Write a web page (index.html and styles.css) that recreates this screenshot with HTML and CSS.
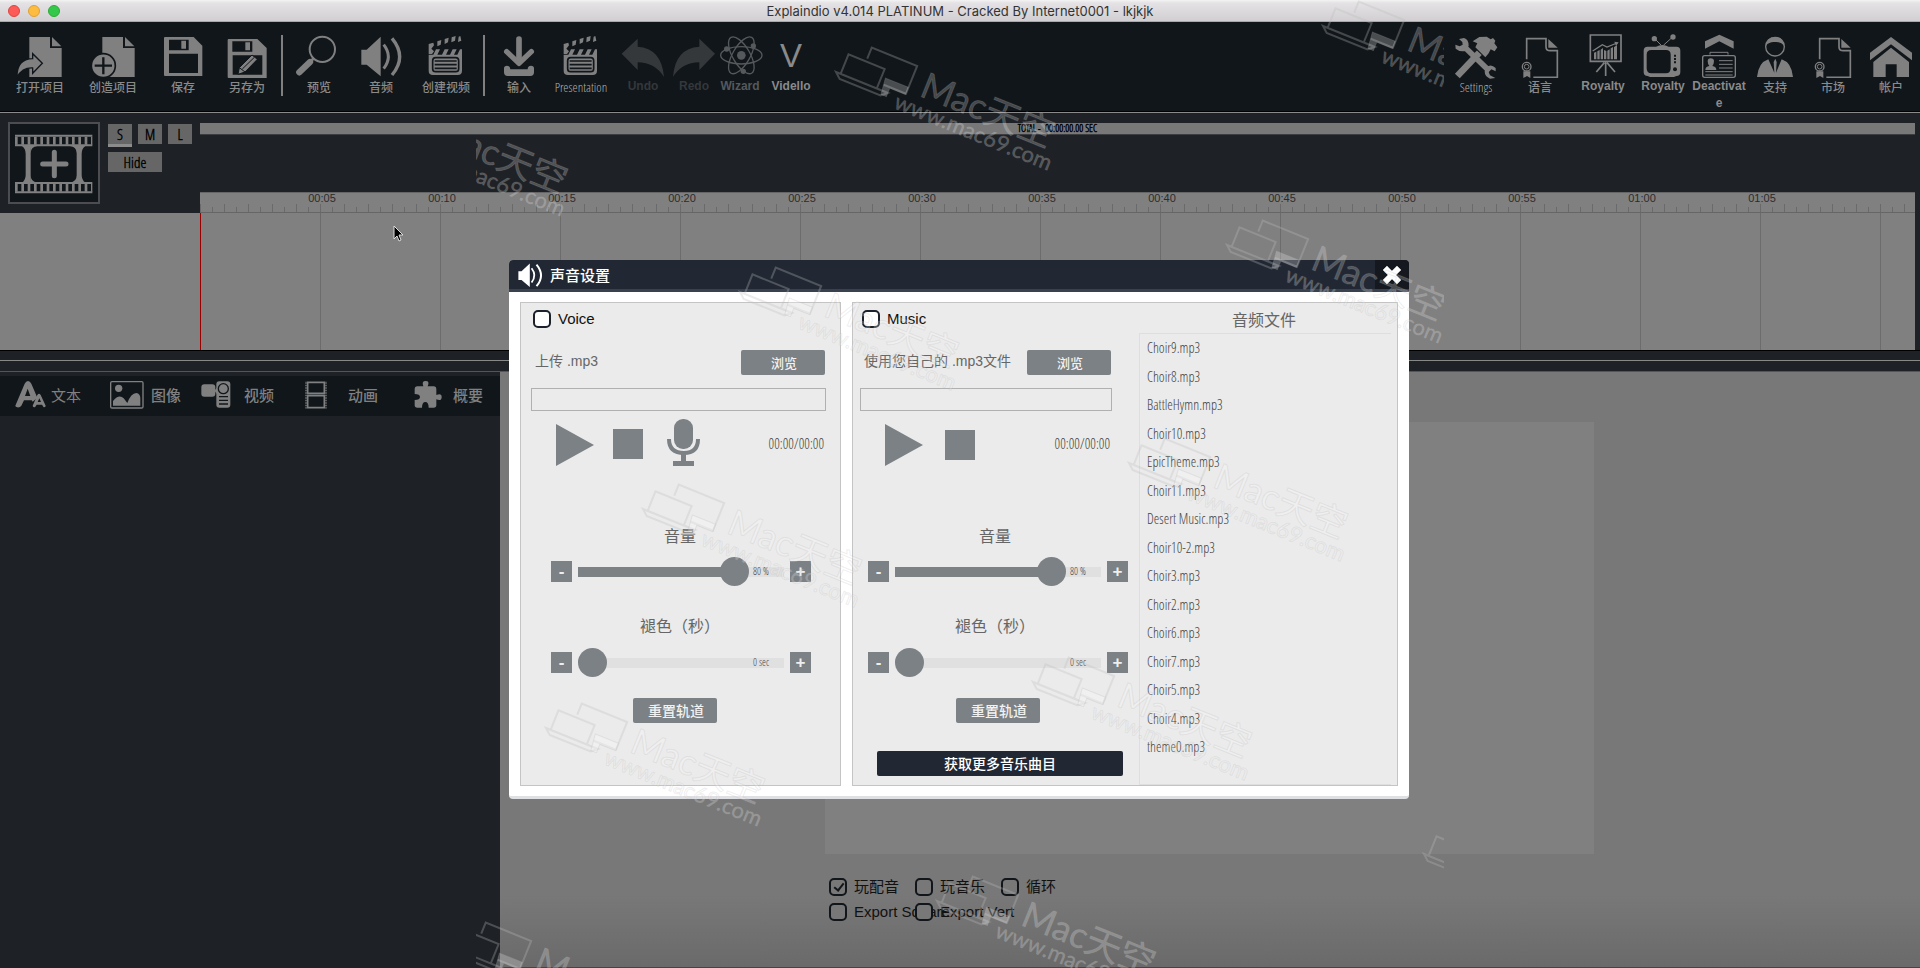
FILE: index.html
```html
<!DOCTYPE html>
<html lang="zh-CN">
<head>
<meta charset="utf-8">
<title>Explaindio v4.014 PLATINUM</title>
<link rel="stylesheet" href="styles.css">
</head>
<body>
<svg class="defs" aria-hidden="true">
  <symbol id="clapper" viewBox="1272 102 132 132">
    <path d="M1286 132l14-4 2 8-8 10 8 8-6 8h-10z M1312 124l12-4-2 14-10 5z M1334 117l12-4-2 14-10 5z M1355 112l12-4-2 14-11 5z M1376 110l5-2 3 14-10 4z"/>
    <path d="M1286 222V164h14l8-16h12l-8 16h14l8-16h12l-8 16h12l8-16h12l-8 16h10l8-16h6V212q0 13-13 13H1299q-13 0-13-13z"/>
    <rect x="1298" y="173" width="78" height="42" rx="9" class="ink-line" stroke-width="5"/>
    <path d="M1304 183h66M1304 194h66M1304 205h66" class="ink-line" stroke-width="5"/>
  </symbol>
  <symbol id="certificate" viewBox="294 102 132 132">
    <path d="M320 178V116H378V140Q378 152 391 152H412V232H340" class="line" stroke-width="5"/>
    <path d="M385 117L413 143H385z"/>
    <circle cx="320" cy="200" r="13" class="line" stroke-width="4"/>
    <circle cx="320" cy="200" r="7" class="line" stroke-width="3"/>
    <path d="M310 214h21v20l-10-6-11 6z"/>
  </symbol>
  <symbol id="speaker" viewBox="1077 102 132 132">
    <path d="M1084 149h16l42-39v119l-42-35h-16z"/>
    <path d="M1151 134q28 36 0 72" class="line" stroke-width="9"/>
    <path d="M1176 115q46 55 0 110" class="line" stroke-width="10"/>
  </symbol>
  <symbol id="mark" viewBox="0 0 250 80" overflow="visible">
    <g transform="rotate(22)">
      <path class="mark-line" d="M0 0H56L50 5H6zM5 0V-21H44V0M24 -24V-36H73V-6H49"/>
      <path class="mark-fill" d="M48 -13H73V-5H56V4H50z"/>
      <text class="mark-name" x="85" y="-9">Mac天空</text>
      <text class="mark-url" x="66" y="12">www.mac69.com</text>
    </g>
  </symbol>
</svg>

<header class="titlebar">
  <span class="lights"><i class="light red"></i><i class="light yellow"></i><i class="light green"></i></span>
  <h1>Explaindio v4.014 PLATINUM - Cracked By Internet0001 - lkjkjk</h1>
</header>

<nav class="toolbar">
  <div class="tools">
    <button class="tool w72"><svg viewBox="54 102 132 132"><path d="M88 111H150V144H185V231H88z"/><path d="M156 111L184 139H156z"/><path class="cut" stroke-width="4" d="M51 231Q50 177 98 176V161L127 190L98 220V204Q68 202 51 231z"/></svg>打开项目</button>
    <button class="tool w74"><svg viewBox="273 102 132 132"><path d="M307 111H369V144H404V231H307z"/><path d="M375 111L403 139H375z"/><circle class="cut" stroke-width="5" cx="310" cy="197" r="36"/><path class="ink-line" stroke-width="7" d="M310 172V223M284 197H336"/></svg>创造项目</button>
    <button class="tool w66"><svg viewBox="483 102 132 132"><path fill-rule="evenodd" d="M495 111H581L607 137V228H495Q492 228 492 225V114Q492 111 495 111zM507 119V151H566V119zM544 122H558V146H544zM507 161V219H594V161z"/></svg>保存</button>
    <button class="tool w62"><svg viewBox="675 102 132 132"><path fill-rule="evenodd" d="M686 117H772L800 144V234H686Q683 234 683 231V120Q683 117 686 117zM697 124V155H757V124zM736 127H750V151H736zM698 166V224H787V166z"/><path class="cut" stroke-width="3" d="M714 223L718 203L756 165L772 178L735 216z"/><path class="ink-line" stroke-width="3" d="M718 203L735 216M727 207L763 172"/></svg>另存为</button>
    <span class="divider"></span>
    <button class="tool w62"><svg viewBox="891 102 132 132"><circle cx="967" cy="148" r="38" class="line" stroke-width="6"/><path class="line round" stroke-width="19" d="M898 217L930 186"/><path class="line" stroke-width="8" d="M930 186L942 174"/></svg>预览</button>
    <button class="tool w62"><svg><use href="#speaker"/></svg>音频</button>
    <button class="tool w68"><svg><use href="#clapper"/></svg>创建视频</button>
    <span class="divider"></span>
    <button class="tool w58"><svg viewBox="48 102 132 132"><path class="line round" stroke-width="17" d="M114 117V185"/><path class="line round" stroke-width="16" d="M77 155L114 190L151 155"/><path d="M69 205Q69 197 78 197Q88 197 88 208H140Q140 197 150 197Q159 197 159 205V217Q159 228 148 228H80Q69 228 69 217z"/></svg>输入</button>
    <button class="tool w66 narrow"><svg><use href="#clapper"/></svg>Presentation</button>
    <button class="tool w58 latin off" disabled><svg viewBox="423 102 132 132"><path d="M425 161L473 116V140Q545 145 552 231Q525 188 473 187V210z"/></svg>Undo</button>
    <button class="tool w44 latin off" disabled><svg viewBox="573 102 132 132"><path d="M702 161L655 116V140Q582 145 576 231Q602 188 655 187V210z"/></svg>Redo</button>
    <button class="tool w48 latin dim"><svg viewBox="714 102 132 132"><g class="line" stroke-width="4"><ellipse cx="784" cy="166" rx="62" ry="26"/><ellipse cx="784" cy="166" rx="62" ry="26" transform="rotate(60 784 166)"/><ellipse cx="784" cy="166" rx="62" ry="26" transform="rotate(120 784 166)"/></g><circle cx="784" cy="166" r="13"/><circle cx="740" cy="147" r="8"/><circle cx="820" cy="138" r="8"/><circle cx="790" cy="214" r="8"/></svg>Wizard</button>
    <button class="tool w54 latin"><span class="letter">V</span>Vidello</button>
  </div>
  <div class="tools">
    <button class="tool w64 narrow"><svg viewBox="102 102 132 132"><path class="line" stroke-width="17" d="M136 143L208 213"/><path d="M117 117L132 114Q146 118 146 137L138 152Q122 158 107 146L106 134L119 139L128 134L127 126z"/><path d="M226 234L210 236Q194 230 194 214L200 202Q212 190 227 204V214L214 208L206 216L210 226z"/><path class="line" stroke-width="20" d="M112 228L178 158"/><path d="M158 124L178 111L200 110L212 118L219 114L226 122L223 130L232 142L224 154L212 148L206 160L196 172L166 142L172 130z"/></svg>Settings</button>
    <button class="tool w64"><svg><use href="#certificate"/></svg>语言</button>
    <button class="tool w62 latin"><svg viewBox="486 102 132 132"><path class="line" stroke-width="5" d="M514 105H606V184H514zM560 186V228M556 188L532 216M564 188L588 216"/><path d="M525 178V158l7-3v23zM535 178V154l7-4v28zM545 178V149l7-5v34zM555 178V150l7 3v25zM565 178V152l7-4v30zM575 178V145l7-4v37zM585 178V141l9-5v42z"/><path class="line" stroke-width="4" d="M521 153L550 134L564 141L594 129"/><path d="M586 125L599 127L591 138z"/></svg>Royalty</button>
    <button class="tool w58 latin"><svg viewBox="669 102 132 132"><path fill-rule="evenodd" d="M689 140H714Q734 130 752 140H775Q787 140 787 152V216Q787 228 775 228L768 231H696L689 228Q677 228 677 216V152Q677 140 689 140zM700 150Q686 150 686 164V205Q686 220 700 220H744Q758 220 758 205V164Q758 150 744 150z"/><path class="line" stroke-width="3" d="M730 136L709 115M736 136L765 110"/><circle cx="709" cy="116" r="8"/><circle cx="765" cy="111" r="8"/><g class="ink"><circle cx="771" cy="208" r="6"/><path d="M768 164h6v6h-6zM768 174h6v6h-6zM768 184h6v6h-6z"/></g></svg>Royalty</button>
    <button class="tool w54 latin"><svg viewBox="837 102 132 132"><path d="M861 124L904 104L947 124V146L904 124L861 146z"/><rect x="854" y="167" width="98" height="65" rx="6" class="line" stroke-width="4"/><path class="line" stroke-width="3" d="M876 164V157H930V164M903 182H944M903 193H944M903 204H944M862 215H944M862 225H944"/><path d="M862 210Q862 200 874 198Q869 191 869 184Q869 175 878 175Q888 175 888 184Q888 191 883 198Q895 200 895 210z"/></svg>Deactivate</button>
    <button class="tool w58"><svg viewBox="1002 102 132 132"><circle cx="1068" cy="140" r="28" class="line" stroke-width="4"/><path d="M1040 137Q1044 111 1068 111Q1092 111 1096 137Q1084 124 1068 126Q1052 124 1040 137z"/><path d="M1014 231Q1018 188 1048 178L1066 218L1064 186L1069 176L1073 186L1071 218L1088 178Q1118 188 1122 231z"/></svg>支持</button>
    <button class="tool w58"><svg><use href="#certificate"/></svg>市场</button>
    <button class="tool w58"><svg viewBox="1347 102 132 132"><path d="M1350 158L1413 111L1476 158V181L1413 133L1350 181z"/><path d="M1360 186L1413 143L1467 186V231H1430V193H1397V231H1360z"/></svg>帐户</button>
  </div>
</nav>

<section class="timeline">
  <div class="timeline-side">
    <button class="add-scene" aria-label="Add scene"><svg viewBox="30 372 264 234"><path class="line" stroke-width="6" d="M45 407H277M45 436H277M45 549H277M45 577H277"/><path class="line" stroke-width="24" stroke-dasharray="8 11" d="M45 422H277M45 563H277"/><path d="M66 438H92V548H66Q77 540 77 525V461Q77 446 66 438zM230 438H256Q245 446 245 461V525Q245 540 256 548H230z"/><path d="M90 438H112Q92 440 92 460zM232 438H210Q230 440 230 460zM90 548H112Q92 546 92 526zM232 548H210Q230 546 230 526z"/><path class="line round" stroke-width="15" d="M163 457V527M128 492H198"/></svg></button>
    <div class="sizes">
      <button class="size active">S</button><button class="size">M</button><button class="size">L</button>
      <button class="size hide">Hide</button>
    </div>
  </div>
  <div class="timeline-main">
    <div class="total">TOTAL -&nbsp; 00:00:00.00 SEC</div>
    <div class="ruler"><span>00:05</span><span>00:10</span><span>00:15</span><span>00:20</span><span>00:25</span><span>00:30</span><span>00:35</span><span>00:40</span><span>00:45</span><span>00:50</span><span>00:55</span><span>01:00</span><span>01:05</span></div>
  </div>
</section>
<div class="tracks"><div class="track-grid"></div></div>
<div class="splitter"></div>

<main class="workspace">
  <aside class="library">
    <nav class="tabs">
      <button class="tab t-text"><svg width="32" height="28" viewBox="45 122 96 84"><path fill-rule="evenodd" d="M46 196L74 130Q78 122 84 122Q90 122 94 130L112 172L98 184L95 180H72L64 196Q60 202 52 201Q46 200 46 196zM83 145L75 167H91z"/><path fill-rule="evenodd" d="M98 196L112 164Q117 156 122 164L137 196Q137 201 131 201L126 193H110L105 201Q98 201 98 196zM118 174L113 185H123z"/></svg>文本</button>
      <button class="tab t-image"><svg width="34" height="28" viewBox="329 128 102 84"><rect x="331" y="130" width="97" height="79" rx="4" class="line" stroke-width="4"/><circle cx="355" cy="150" r="11"/><path d="M338 202V188Q356 166 370 180L381 194Q392 164 408 164Q420 166 420 180V202z"/></svg>图像</button>
      <button class="tab t-video"><svg width="30" height="28" viewBox="602 127 90 84"><rect x="603" y="137" width="42" height="37" rx="9"/><path d="M642 156L652 144V168z"/><rect x="648" y="128" width="42" height="79" rx="9"/><circle cx="669" cy="150" r="15" class="ink-line" stroke-width="4"/><path class="ink-line" stroke-width="4" d="M656 174H683M656 185H683M656 196H683"/></svg>视频</button>
      <button class="tab t-motion"><svg width="22" height="28" viewBox="914 127 66 84"><path class="line" stroke-width="5" d="M922 131H972V164H922zM922 171H972V207H922z"/><path class="line" stroke-width="4" stroke-dasharray="3 2" d="M917 129V210M977 129V210"/></svg>动画</button>
      <button class="tab t-more"><svg width="28" height="28" viewBox="1240 123 84 84"><path d="M1250 139H1268Q1262 123 1275 123Q1288 123 1281 139H1299Q1307 139 1307 148V165Q1323 158 1323 171Q1323 185 1307 178V196Q1307 203 1299 203H1284Q1284 186 1274 186Q1264 186 1264 203H1250Q1242 203 1242 196V180Q1258 180 1258 171Q1258 162 1242 162V148Q1242 139 1250 139z"/></svg>概要</button>
    </nav>
  </aside>
  <section class="preview">
    <div class="stage"></div>
    <div class="options">
      <label class="check"><input type="checkbox" checked>玩配音</label>
      <label class="check"><input type="checkbox">玩音乐</label>
      <label class="check"><input type="checkbox">循环</label>
      <label class="check"><input type="checkbox">Export Square</label>
      <label class="check"><input type="checkbox">Export Vert</label>
    </div>
  </section>
</main>

<div class="overlay">
  <section class="dialog" role="dialog" aria-labelledby="dialog-title">
    <header class="dialog-head">
      <svg width="26" height="26"><use href="#speaker"/></svg>
      <h2 id="dialog-title">声音设置</h2>
      <button class="close" aria-label="Close"><svg width="18" height="18" viewBox="0 0 18 18"><path d="M4 4L14 14M14 4L4 14"/></svg></button>
    </header>
    <div class="dialog-body">
      <section class="panel voice">
        <label class="check"><input type="checkbox">Voice</label>
        <div class="upload"><label for="voice-file">上传 .mp3</label><button class="btn">浏览</button></div>
        <input class="path" id="voice-file" type="text">
        <div class="player">
          <button aria-label="Play"><svg width="38" height="44" viewBox="0 0 38 44"><path d="M0 1L38 22L0 43z"/></svg></button>
          <button aria-label="Stop" class="stop"><svg width="30" height="30"><rect width="30" height="30"/></svg></button>
          <button aria-label="Record" class="mic"><svg width="34" height="48" viewBox="0 0 34 48"><rect x="7" width="19" height="30" rx="9"/><path class="line" stroke-width="4" d="M2 20Q2 34 17 34Q31 34 31 20"/><path d="M14 34H19V42H27V47H6V42H14z"/></svg></button>
          <span class="time">00:00/00:00</span>
        </div>
        <div class="controls">
          <label class="caption" for="voice-vol">音量</label>
          <div class="slider"><button class="step">-</button><div class="range"><input id="voice-vol" type="range" value="80" class="full"><output for="voice-vol">80 %</output></div><button class="step">+</button></div>
          <label class="caption second" for="voice-fade">褪色（秒）</label>
          <div class="slider"><button class="step">-</button><div class="range"><input id="voice-fade" type="range" value="0"><output for="voice-fade">0 sec</output></div><button class="step">+</button></div>
          <button class="btn reset">重置轨道</button>
        </div>
      </section>
      <section class="panel music">
        <div class="music-main">
          <label class="check"><input type="checkbox">Music</label>
          <div class="upload"><label for="music-file">使用您自己的 .mp3文件</label><button class="btn">浏览</button></div>
          <input class="path" id="music-file" type="text">
          <div class="player">
            <button aria-label="Play"><svg width="38" height="44" viewBox="0 0 38 44"><path d="M0 1L38 22L0 43z"/></svg></button>
            <button aria-label="Stop" class="stop"><svg width="30" height="30"><rect width="30" height="30"/></svg></button>
            <span class="time">00:00/00:00</span>
          </div>
          <div class="controls">
            <label class="caption" for="music-vol">音量</label>
            <div class="slider"><button class="step">-</button><div class="range"><input id="music-vol" type="range" value="80" class="full"><output for="music-vol">80 %</output></div><button class="step">+</button></div>
            <label class="caption second" for="music-fade">褪色（秒）</label>
            <div class="slider"><button class="step">-</button><div class="range"><input id="music-fade" type="range" value="0"><output for="music-fade">0 sec</output></div><button class="step">+</button></div>
            <button class="btn reset">重置轨道</button>
            <button class="btn more">获取更多音乐曲目</button>
          </div>
        </div>
        <div class="files">
          <h3>音频文件</h3>
          <ul>
            <li>Choir9.mp3</li><li>Choir8.mp3</li><li>BattleHymn.mp3</li><li>Choir10.mp3</li><li>EpicTheme.mp3</li><li>Choir11.mp3</li><li>Desert Music.mp3</li><li>Choir10-2.mp3</li><li>Choir3.mp3</li><li>Choir2.mp3</li><li>Choir6.mp3</li><li>Choir7.mp3</li><li>Choir5.mp3</li><li>Choir4.mp3</li><li>theme0.mp3</li>
          </ul>
        </div>
      </section>
    </div>
  </section>
</div>

<svg class="marks" aria-hidden="true">
  <use href="#mark" width="250" height="80" x="-127" y="118"/>
  <use href="#mark" width="250" height="80" x="360" y="72"/>
  <use href="#mark" width="250" height="80" x="847" y="26"/>
  <use href="#mark" width="250" height="80" x="264" y="292"/>
  <use href="#mark" width="250" height="80" x="751" y="245"/>
  <use href="#mark" width="250" height="80" x="167" y="509"/>
  <use href="#mark" width="250" height="80" x="653" y="463"/>
  <use href="#mark" width="250" height="80" x="70" y="728"/>
  <use href="#mark" width="250" height="80" x="557" y="682"/>
  <use href="#mark" width="250" height="80" x="-26" y="947"/>
  <use href="#mark" width="250" height="80" x="461" y="901"/>
  <use href="#mark" width="250" height="80" x="948" y="854"/>
</svg>
<svg class="pointer" width="12" height="18" viewBox="0 0 12 18" aria-hidden="true"><path d="M1 1V14L4 11L6 16L8 15L6 10H10z"/></svg>
</body>
</html>
```

FILE: styles.css
```css
:root {
  --ink: #11161a;
  --deep: #1e2126;
  --gray: #808080;
  --steel: #7c8185;
  --sans: "Liberation Sans", "Noto Sans CJK SC", sans-serif;
  --cjk: "Noto Sans CJK SC", sans-serif;
  --narrow: "Open Sans Condensed Light", "Open Sans Condensed", "Roboto Condensed", Roboto, sans-serif;
}
* { box-sizing: border-box; margin: 0; padding: 0; }
body {
  display: flex; flex-direction: column; min-height: 100vh; position: relative;
  overflow: hidden; background: var(--deep); font-family: var(--sans); font-size: 15px; color: #111;
}
button { font: inherit; color: inherit; background: none; border: 0; }
svg { fill: currentColor; flex: none; display: block; overflow: visible; }
.defs { position: absolute; width: 0; height: 0; }
.line { fill: none; stroke: currentColor; }
.round { stroke-linecap: round; stroke-linejoin: round; }
.ink { fill: var(--ink); }
.ink-line { fill: none; stroke: var(--ink); }
.cut { fill: currentColor; stroke: var(--ink); }

/* Window title */
.titlebar {
  display: grid; grid-template-columns: 1fr auto 1fr; align-items: center; height: 22px;
  background: linear-gradient(#f4f3f4, #e4e2e4 3px, #d1cfd1); border-bottom: 1px solid #aaa8aa;
}
.titlebar h1 { font: 400 13px/20px Inter, sans-serif; color: #333; }
.lights { display: flex; gap: 8px; padding-left: 8px; }
.light { width: 12px; height: 12px; border-radius: 50%; border: 1px solid #e0443e; background: #fc5b57; }
.yellow { background: #fdbc40; border-color: #dfa133; }
.green { background: #34c84a; border-color: #2aac35; }

/* Toolbar */
.toolbar {
  display: flex; justify-content: space-between; height: 91px; padding-left: 4px;
  background: var(--ink); border-bottom: 1px solid #8a8a8a; box-shadow: inset 0 -1px #000;
}
.tools { display: flex; align-items: flex-start; }
.tool {
  display: flex; flex-direction: column; align-items: center; padding-top: 12px;
  font: 500 12px/17px var(--cjk); color: #8a8a8a; word-break: break-all; white-space: normal;
}
.tool svg, .letter { width: 44px; height: 44px; color: var(--gray); }
.letter { font: 33px/44px "Liberation Sans", sans-serif; color: #8a8a8a; }
.tool.latin { font: 700 12px/17px "Liberation Sans", sans-serif; }
.tool.latin .letter { font-weight: 400; }
.tool.narrow { font: 300 13px/18px var(--narrow); color: #b0b0b0; word-break: normal; }
.tool.off, .tool.off svg { color: #34383b; }
.tool.dim, .tool.dim svg { color: #55595c; }
.w44 { width: 44px; } .w48 { width: 48px; } .w54 { width: 54px; } .w58 { width: 58px; } .w62 { width: 62px; }
.w64 { width: 64px; } .w66 { width: 66px; } .w68 { width: 68px; } .w72 { width: 72px; } .w74 { width: 74px; }
.divider { width: 2px; height: 61px; margin: 13px 5px 0 3px; background: var(--gray); }

/* Timeline */
.timeline { display: flex; height: 100px; background: var(--deep); }
.timeline-side { display: flex; align-items: flex-start; gap: 8px; width: 200px; padding: 9px 0 0 8px; flex: none; }
.add-scene { width: 92px; height: 82px; border: 2px solid #4b4d50; background: var(--ink); color: var(--gray); flex: none; }
.add-scene svg { width: 88px; height: 78px; }
.sizes { display: grid; grid-template-columns: repeat(3, 24px); gap: 5px 6px; padding-top: 2px; }
.size { height: 20px; background: #666; font: 300 15px/19px var(--narrow); color: #000; -webkit-text-stroke: .4px #000; }
.size.active { height: 23px; border-bottom: 3px solid #8c8c8c; }
.size.hide { grid-column: span 2; }
.timeline-main { display: flex; flex-direction: column; justify-content: space-between; flex: 1; padding-top: 10px; margin-right: 5px; min-width: 0; }
.total { height: 12px; background: #787878; border-bottom: 1px solid #3b3d40; font: 300 10px/11px var(--narrow); color: #000; text-align: center; -webkit-text-stroke: .4px #000; }
.ruler {
  display: flex; height: 21px; padding-left: 62px; overflow: hidden; border-top: 1px solid #666; border-bottom: 1px solid #666;
  background:
    linear-gradient(90deg, #6a6a6a 1px, transparent 1px) 0 100% / 24px 8px repeat-x,
    linear-gradient(90deg, #6a6a6a 1px, transparent 1px) 0 100% / 12px 5px repeat-x, var(--gray);
}
.ruler span { width: 120px; flex: none; text-align: center; font-size: 11px; line-height: 11px; color: #2c2c2c; }
.tracks { height: 138px; padding: 0 5px 0 200px; background: linear-gradient(90deg, var(--gray) calc(100% - 5px), var(--deep) 0); border-bottom: 1px solid #000; }
.track-grid { height: 100%; border-left: 1px solid #900; background: linear-gradient(90deg, transparent 119px, #6c6c6c 119px) 0 0 / 120px 100%; }
.splitter { height: 21px; border-bottom: 1px solid #555; background: linear-gradient(#888, #888) 0 9px / 100% 1px no-repeat, var(--deep); }

/* Workspace */
.workspace { display: flex; flex: 1; }
.library { width: 500px; padding-top: 4px; background: var(--deep); flex: none; }
.tabs { display: grid; grid-template-columns: repeat(5, 100px); height: 40px; background: var(--ink); }
.tab { display: flex; align-items: center; padding-bottom: 2px; font: 500 15px/38px var(--cjk); color: var(--gray); }
.t-text { padding-left: 15px; gap: 4px; font-weight: 400; }
.t-image { padding-left: 10px; gap: 7px; }
.t-video { padding-left: 1px; gap: 13px; }
.t-motion { padding-left: 5px; gap: 21px; }
.t-more { padding-left: 14px; gap: 11px; }
.preview {
  display: flex; flex-direction: column; flex: 1; padding: 50px 326px 0 325px; border-bottom: 1px solid #444;
  background: linear-gradient(#787878 88%, #6a6a6a);
}
.stage { height: 432px; background: var(--gray); }
.options { display: grid; grid-template-columns: repeat(3, 86px); gap: 7px 0; padding: 24px 4px; }
.check { display: flex; align-items: center; gap: 7px; height: 18px; white-space: nowrap; font-size: 15px; line-height: 18px; color: #111; }
.check input { appearance: none; width: 18px; height: 18px; border: 2px solid #1c222b; border-radius: 5px; background: #fff; flex: none; position: relative; }
.options .check input { background: #787878; border-color: var(--ink); }
.options .check input:checked::after {
  content: ""; position: absolute; left: 5px; top: 1px; width: 4px; height: 8px;
  border: solid var(--ink); border-width: 0 2px 2px 0; transform: rotate(38deg);
}

/* Sound dialog */
.overlay { position: absolute; inset: 260px 0 auto; display: flex; justify-content: center; padding-right: 2px; }
.dialog { width: 900px; border-radius: 4px; overflow: hidden; background: #fff; border-bottom: 3px solid #dfe0e4; }
.dialog-head { display: flex; align-items: center; height: 32px; padding-left: 8px; background: #222833; border-bottom: 3px solid #37414f; color: #fff; }
.dialog-head h2 { flex: 1; padding-left: 7px; font: 500 15px/28px var(--cjk); }
.close { display: grid; place-items: center; width: 34px; height: 29px; background: #15191f; }
.close path { stroke: #fff; stroke-width: 6; stroke-linecap: square; }
.dialog-body { display: flex; gap: 11px; padding: 10px 11px; }
.panel { height: 484px; border: 1px solid #c4c4c4; background: #ebebeb; color: #666; }
.voice { width: 321px; padding: 7px 14px 0 10px; }
.music { display: flex; flex: 1; }
.music-main { width: 286px; padding: 7px 27px 0 7px; flex: none; }
.panel .check { padding-left: 2px; }
.upload { display: flex; justify-content: space-between; height: 25px; margin-top: 22px; padding: 0 1px 0 4px; font: 14px/22px "Liberation Sans", "Noto Sans CJK SC", sans-serif; }
.btn { display: block; width: 84px; height: 25px; padding-left: 2px; border-radius: 2px; background: var(--steel); color: #f2f2f2; font: 500 13px/25px var(--cjk); }
.path { display: block; width: 100%; height: 23px; margin-top: 13px; padding: 0 4px; border: 1px solid #b0b0b0; background: transparent; }
.player { display: flex; align-items: center; height: 50px; margin-top: 8px; padding: 0 2px 0 25px; color: var(--steel); }
.player button { padding-top: 2px; }
.player .mic { padding: 0 0 2px; }
.stop { margin: 0 24px 3px 19px; }
.music .stop { margin-bottom: 0; margin-left: 22px; }
.time { flex: 1; text-align: right; font: 300 14px/20px var(--narrow); color: #444; }
.controls { width: 260px; margin: 54px 0 0 20px; }
.music .controls { margin-left: 8px; }
.caption { display: block; margin-bottom: 10px; text-align: center; font: 16px/24px var(--cjk); }
.voice .caption { padding-right: 2px; }
.music .caption { padding-right: 6px; }
.caption.second { margin-top: 27px; margin-bottom: 11px; }
.slider { display: flex; align-items: center; justify-content: space-between; height: 29px; }
.step { width: 21px; height: 21px; background: var(--steel); color: #eee; font: 700 17px/20px "Liberation Sans", sans-serif; }
.range { position: relative; width: 206px; height: 29px; }
.range input { appearance: none; display: block; width: 100%; height: 29px; border-radius: 5px; background: linear-gradient(#e0e0e0, #e0e0e0) 0 50% / 100% 10px no-repeat; }
.range input.full { background: linear-gradient(90deg, var(--steel) 75%, #e0e0e0 75%) 0 50% / 100% 10px no-repeat; }
.range input::-webkit-slider-thumb { appearance: none; width: 29px; height: 29px; border-radius: 50%; background: var(--steel); }
.range output { position: absolute; left: 175px; top: 8px; font: 300 10px/13px var(--narrow); color: #444; white-space: nowrap; }
.reset { margin: 21px auto 0; font-size: 14px; }
.voice .reset { margin-left: 82px; }
.more { width: 246px; margin: 28px 0 0 9px; padding-left: 0; background: #222833; color: #fff; font-size: 14px; }
.files { display: flex; flex-direction: column; flex: 1; padding-right: 6px; }
.files h3 { height: 30px; padding-right: 2px; text-align: center; font: 16px/33px var(--cjk); }
.files ul {
  display: flex; flex-direction: column; justify-content: space-between; flex: 1; padding: 4px 7px 27px;
  list-style: none; border: 1px solid #dedede; border-right: 0; font: 300 14px/20px var(--narrow); color: #444;
}

/* Overlaid marks and pointer */
.marks { position: absolute; top: 0; left: 50%; width: 968px; height: 100%; margin-left: -484px; overflow: hidden; pointer-events: none; }
.mark-line { fill: none; stroke: rgba(190, 190, 190, .3); stroke-width: 2; }
.mark-fill, .mark-name, .mark-url { fill: rgba(255, 255, 255, .24); stroke: rgba(170, 170, 170, .2); stroke-width: 1; }
.mark-name { font: 36px Lato, "Noto Sans CJK SC", sans-serif; }
.mark-url { font: 22px Lato, sans-serif; }
.pointer { position: absolute; left: 393px; top: 225px; fill: #000; stroke: #ddd; stroke-width: 1; }
```
